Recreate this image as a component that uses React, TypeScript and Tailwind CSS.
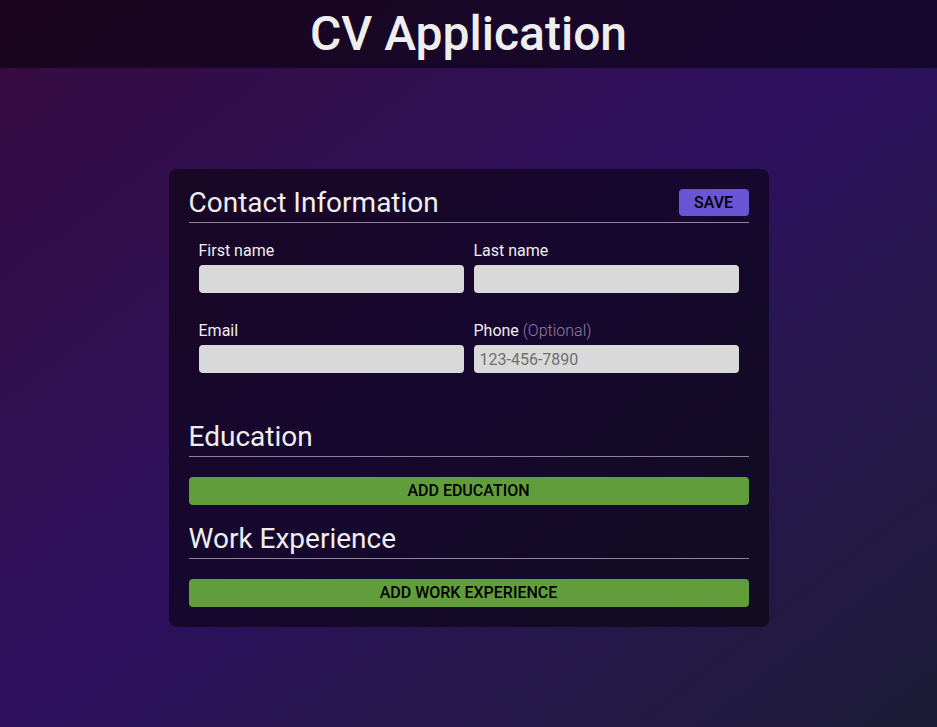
import React from "react";

function Field({ label, optional, placeholder }: { label: string; optional?: boolean; placeholder?: string }) {
  return (
    <label className="flex flex-col">
      <span className="text-[16px] leading-[19px] text-[#eeeeee] mb-[5px]">
        {label}
        {optional && <span className="font-light text-[#8f7fa8]"> (Optional)</span>}
      </span>
      <input
        className="h-[28px] w-full rounded-[4px] bg-[#d9d9d9] px-[6px] text-[16px] text-black placeholder:text-[#6f6f6f] outline-none"
        placeholder={placeholder}
      />
    </label>
  );
}

function SectionHeading({ title, children }: { title: string; children?: React.ReactNode }) {
  return (
    <div className="flex items-start justify-between border-b border-[#8a8496] pb-[5px]">
      <h2 className="text-[28px] leading-[28px] text-[#eeeeee]">{title}</h2>
      {children}
    </div>
  );
}

export default function App() {
  return (
    <div
      className="min-h-[727px] bg-gradient-to-br from-[#360a3e] via-[#2d0f5e] to-[#1d1b36] text-[#eeeeee]"
      style={{ fontFamily: "Roboto, 'Liberation Sans', sans-serif" }}
    >
      <header className="h-[68px] bg-black/50 flex items-center justify-center">
        <h1 className="text-[48px] leading-[56px] font-medium text-[#eeeeee]">CV Application</h1>
      </header>

      <main className="flex justify-center pt-[101px]">
        <div className="w-[600px] rounded-[8px] bg-black/50 p-[20px]">
          <SectionHeading title="Contact Information">
            <button className="h-[27px] w-[70px] rounded-[4px] bg-[#6a55d6] text-[16px] font-medium text-black">
              SAVE
            </button>
          </SectionHeading>

          <div className="grid grid-cols-2 gap-x-[10px] gap-y-[28px] px-[10px] pt-[18px]">
            <Field label="First name" />
            <Field label="Last name" />
            <Field label="Email" />
            <Field label="Phone" optional placeholder="123-456-7890" />
          </div>

          <div className="mt-[50px]">
            <SectionHeading title="Education" />
            <button className="mt-[20px] h-[28px] w-full rounded-[4px] bg-[#619e3b] text-[16px] font-medium text-black">
              ADD EDUCATION
            </button>
          </div>

          <div className="mt-[20px]">
            <SectionHeading title="Work Experience" />
            <button className="mt-[20px] h-[28px] w-full rounded-[4px] bg-[#619e3b] text-[16px] font-medium text-black">
              ADD WORK EXPERIENCE
            </button>
          </div>
        </div>
      </main>
    </div>
  );
}
